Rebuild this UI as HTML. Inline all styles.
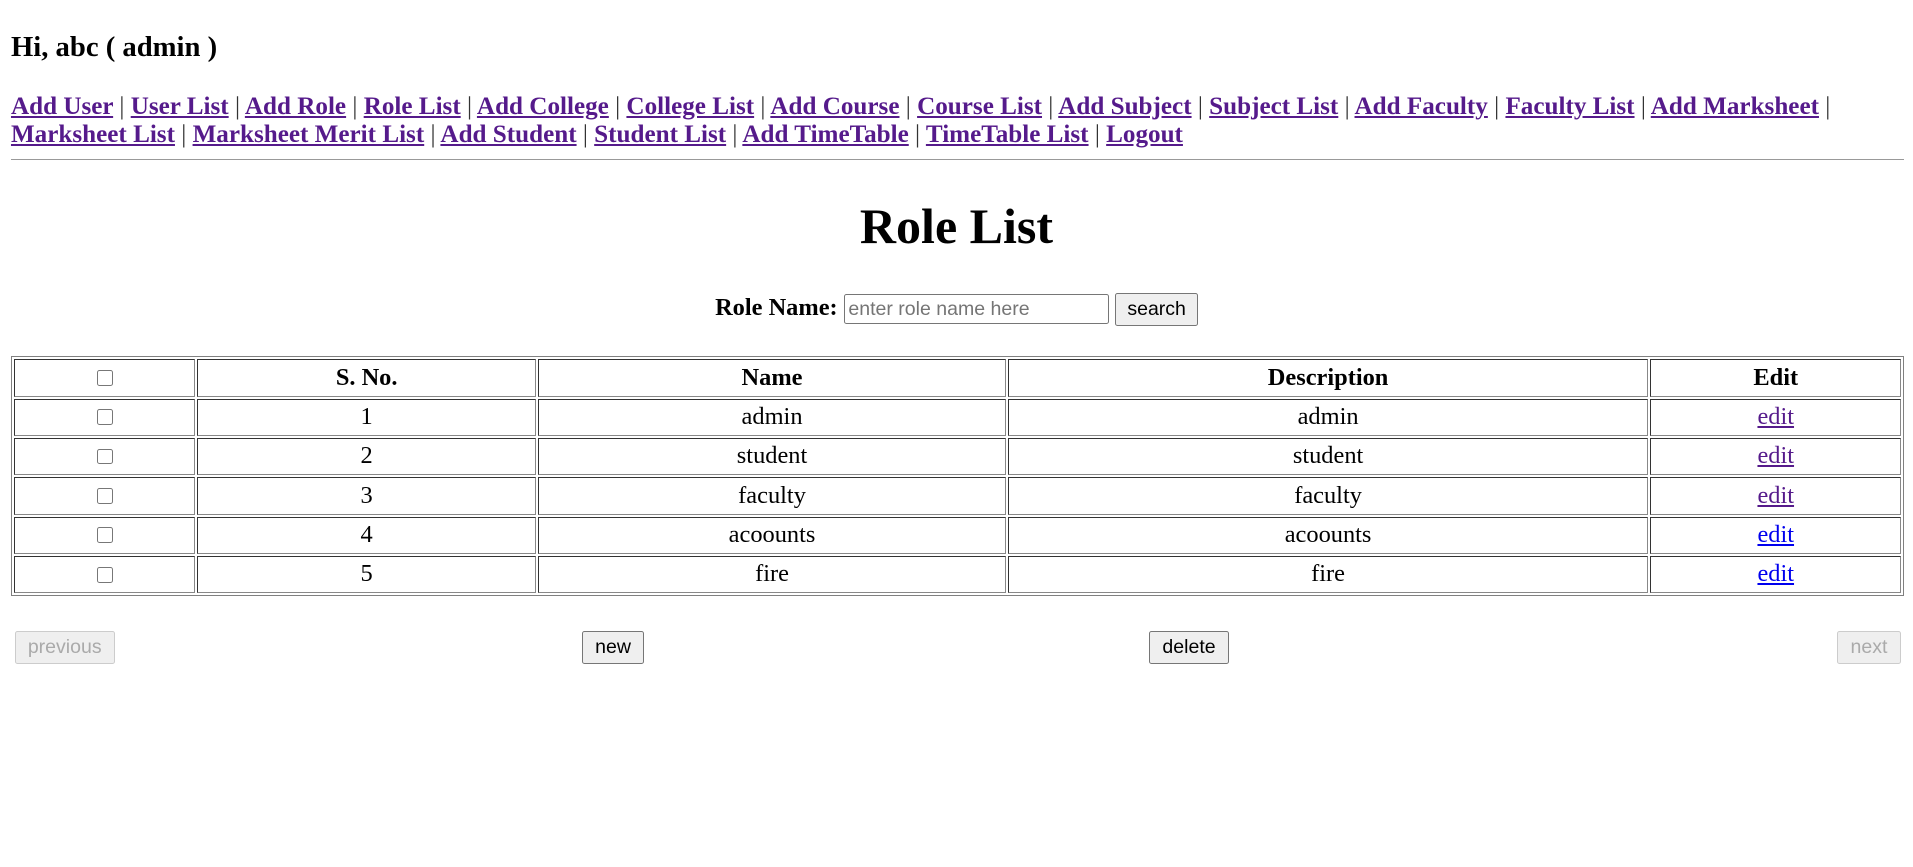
<!DOCTYPE html>
<html><head><meta charset="utf-8"><style>
html,body{margin:0;padding:0;background:#fff;}
#w{zoom:1.22;width:1568px;height:711px;position:relative;font-family:"Liberation Serif",serif;color:#000;overflow:hidden;}
.hi{position:absolute;left:9px;top:25px;font-size:23.5px;font-weight:bold;}
.nav{position:absolute;left:9px;top:76px;width:1560px;font-size:20.6px;font-weight:bold;line-height:23px;}
.nav a{color:#551a8b;text-decoration:underline;}
.nav span{font-weight:normal;color:#333;}
hr{position:absolute;left:9px;top:130px;width:1552px;margin:0;border:0;border-top:1px solid #999;}
h1{position:absolute;left:0;width:1568px;top:161px;margin:0;text-align:center;font-size:41px;line-height:50px;}
.srch{position:absolute;left:0;width:1568px;top:240px;text-align:center;font-size:20px;font-weight:bold;}
.srch input{width:210px;height:23px;border:1px solid #767676;border-radius:2px;font:16px "Liberation Sans",sans-serif;padding:0 3px;vertical-align:middle;}
button{font:16px "Liberation Sans",sans-serif;background:#efefef;border:1px solid #767676;border-radius:2px;padding:0 10px;height:27px;vertical-align:middle;color:#000;}
.srch button{padding:0 9px;}
button[disabled]{color:#aaa;border-color:#ccc;}
table{position:absolute;left:9px;top:292px;width:1552px;border:1px solid #808080;border-spacing:2px;font-size:20px;}
td,th{border:1px solid;border-color:#333 #888 #888 #333;text-align:center;height:29px;padding:0;vertical-align:middle;line-height:22px;}
td a{color:#551a8b;}
td a.b{color:#00e;}
.cb{display:inline-block;width:13px;height:13px;border:1px solid #777;border-radius:2px;vertical-align:-1px;box-sizing:border-box;}
.bt{position:absolute;top:517px;}
</style></head><body><div id="w">
<div class="hi">Hi, abc ( admin )</div>
<div class="nav"><a>Add User</a> <span>|</span> <a>User List</a> <span>|</span> <a>Add Role</a> <span>|</span> <a>Role List</a> <span>|</span> <a>Add College</a> <span>|</span> <a>College List</a> <span>|</span> <a>Add Course</a> <span>|</span> <a>Course List</a> <span>|</span> <a>Add Subject</a> <span>|</span> <a>Subject List</a> <span>|</span> <a>Add Faculty</a> <span>|</span> <a>Faculty List</a> <span>|</span> <a>Add Marksheet</a> <span>|</span><br><a>Marksheet List</a> <span>|</span> <a>Marksheet Merit List</a> <span>|</span> <a>Add Student</a> <span>|</span> <a>Student List</a> <span>|</span> <a>Add TimeTable</a> <span>|</span> <a>TimeTable List</a> <span>|</span> <a>Logout</a></div>
<hr>
<h1>Role List</h1>
<div class="srch">Role Name: <input placeholder="enter role name here"> <button>search</button></div>
<table>
<tr><th style="width:147px"><span class="cb"></span></th><th style="width:276px">S. No.</th><th style="width:382px">Name</th><th style="width:523px">Description</th><th>Edit</th></tr>
<tr><td><span class="cb"></span></td><td>1</td><td>admin</td><td>admin</td><td><a href="#">edit</a></td></tr>
<tr><td><span class="cb"></span></td><td>2</td><td>student</td><td>student</td><td><a href="#">edit</a></td></tr>
<tr><td><span class="cb"></span></td><td>3</td><td>faculty</td><td>faculty</td><td><a href="#">edit</a></td></tr>
<tr><td><span class="cb"></span></td><td>4</td><td>acoounts</td><td>acoounts</td><td><a class="b" href="#">edit</a></td></tr>
<tr><td><span class="cb"></span></td><td>5</td><td>fire</td><td>fire</td><td><a class="b" href="#">edit</a></td></tr>
</table>
<button class="bt" style="left:12px" disabled>previous</button>
<button class="bt" style="left:477px">new</button>
<button class="bt" style="left:942px">delete</button>
<button class="bt" style="left:1506px" disabled>next</button>
</div></body></html>
